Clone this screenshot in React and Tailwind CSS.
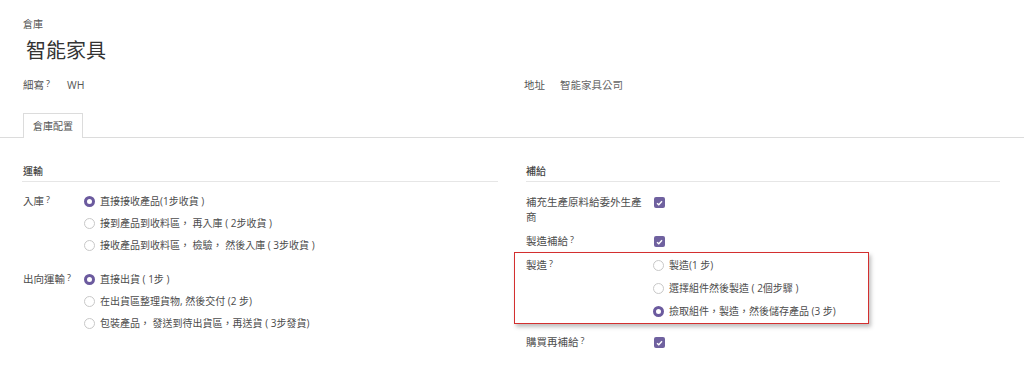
import React from "react";

const FONT = { fontFamily: '"Open Sans", "Noto Sans CJK TC", sans-serif' };

const Help = () => <sup className="text-[9px] ml-[2px] text-[#444] relative -top-[2px]">?</sup>;

const Radio = ({ checked, label }) => (
  <div className="flex items-center h-[22px]">
    {checked ? (
      <span className="w-[11px] h-[11px] rounded-full border-[3px] border-[#6b5a9e] bg-white" />
    ) : (
      <span className="w-[11px] h-[11px] rounded-full border border-[#c8c8c8] bg-white" />
    )}
    <span className="ml-[5px] text-[10px] text-[#4c4c4c]">{label}</span>
  </div>
);

const Check = () => (
  <span className="w-[11px] h-[11px] rounded-[2px] bg-[#6f619f] flex items-center justify-center">
    <svg width="7" height="6" viewBox="0 0 7 6">
      <path d="M1 3.2 L2.8 4.8 L6 1.2" stroke="white" strokeWidth="1.4" fill="none" />
    </svg>
  </span>
);

export default function App() {
  return (
    <div className="w-[1024px] h-[384px] bg-white overflow-hidden text-[#4c4c4c]" style={FONT}>
      <div className="px-[23px] pt-[17px]">
        <div className="text-[10px] leading-[14px] text-[#555]">倉庫</div>
        <div className="text-[20px] leading-[28px] mt-[6px] pl-[3px] text-[#333]">智能家具</div>
        <div className="flex mt-[12px] text-[10.5px] leading-[16px]">
          <div className="w-[501px] flex">
            <div className="w-[44px] text-[#555]">細寫<Help /></div>
            <div className="text-[#555]">WH</div>
          </div>
          <div className="flex">
            <div className="w-[36px] text-[#555]">地址</div>
            <div className="text-[#666]">智能家具公司</div>
          </div>
        </div>
      </div>

      <div className="mt-[20px] border-b border-[#dcdcdc] px-[23px] flex">
        <div className="h-[25px] w-[60px] border border-b-0 border-[#dcdcdc] bg-white -mb-px flex items-center justify-center text-[10px] text-[#555]">
          倉庫配置
        </div>
      </div>

      <div className="flex px-[22px] mt-[26px] gap-[26px]">
        <div className="w-[476px]">
          <div className="text-[10px] leading-[14px] font-medium text-[#444] pl-px pb-[3px] border-b border-[#e6e6e6]">運輸</div>
          <div className="flex mt-[8px] text-[10.5px]">
            <div className="w-[62px] pl-px leading-[22px]">入庫<Help /></div>
            <div>
              <Radio checked label="直接接收產品(1步收貨 )" />
              <Radio label="接到產品到收料區， 再入庫 ( 2步收貨 )" />
              <Radio label="接收產品到收料區， 檢驗， 然後入庫 ( 3步收貨 )" />
            </div>
          </div>
          <div className="flex mt-[12px] text-[10.5px]">
            <div className="w-[62px] pl-px leading-[22px]">出向運輸<Help /></div>
            <div>
              <Radio checked label="直接出貨 ( 1步 )" />
              <Radio label="在出貨區整理貨物, 然後交付 (2 步)" />
              <Radio label="包裝產品， 發送到待出貨區，再送貨 ( 3步發貨)" />
            </div>
          </div>
        </div>

        <div className="w-[476px] pl-[2px]">
          <div className="text-[10px] leading-[14px] font-medium text-[#444] pb-[3px] border-b border-[#e6e6e6]">補給</div>
          <div className="flex mt-[13px] text-[10.5px] leading-[15px]">
            <div className="w-[128px]">補充生產原料給委外生產<br />商</div>
            <div className="pt-[2px]"><Check /></div>
          </div>
          <div className="flex mt-[9px] text-[10.5px] leading-[15px]">
            <div className="w-[128px]">製造補給<Help /></div>
            <div className="pt-[2px]"><Check /></div>
          </div>
          <div className="-ml-[12px] mt-[3px] w-[355px] border-[1.5px] border-[#d32f2f] shadow-[2px_3px_4px_rgba(0,0,0,0.25)] pl-[11px] pt-[1px] pb-[1px] flex text-[10.5px]">
            <div className="w-[127px] leading-[22px]">製造<Help /></div>
            <div className="flex flex-col gap-[1px]">
              <Radio label="製造(1 步)" />
              <Radio label="選擇組件然後製造 ( 2個步驟 )" />
              <Radio checked label="撿取組件，製造，然後儲存產品 (3 步)" />
            </div>
          </div>
          <div className="flex mt-[11px] text-[10.5px] leading-[15px]">
            <div className="w-[128px]">購買再補給<Help /></div>
            <div className="pt-[2px]"><Check /></div>
          </div>
        </div>
      </div>
    </div>
  );
}
